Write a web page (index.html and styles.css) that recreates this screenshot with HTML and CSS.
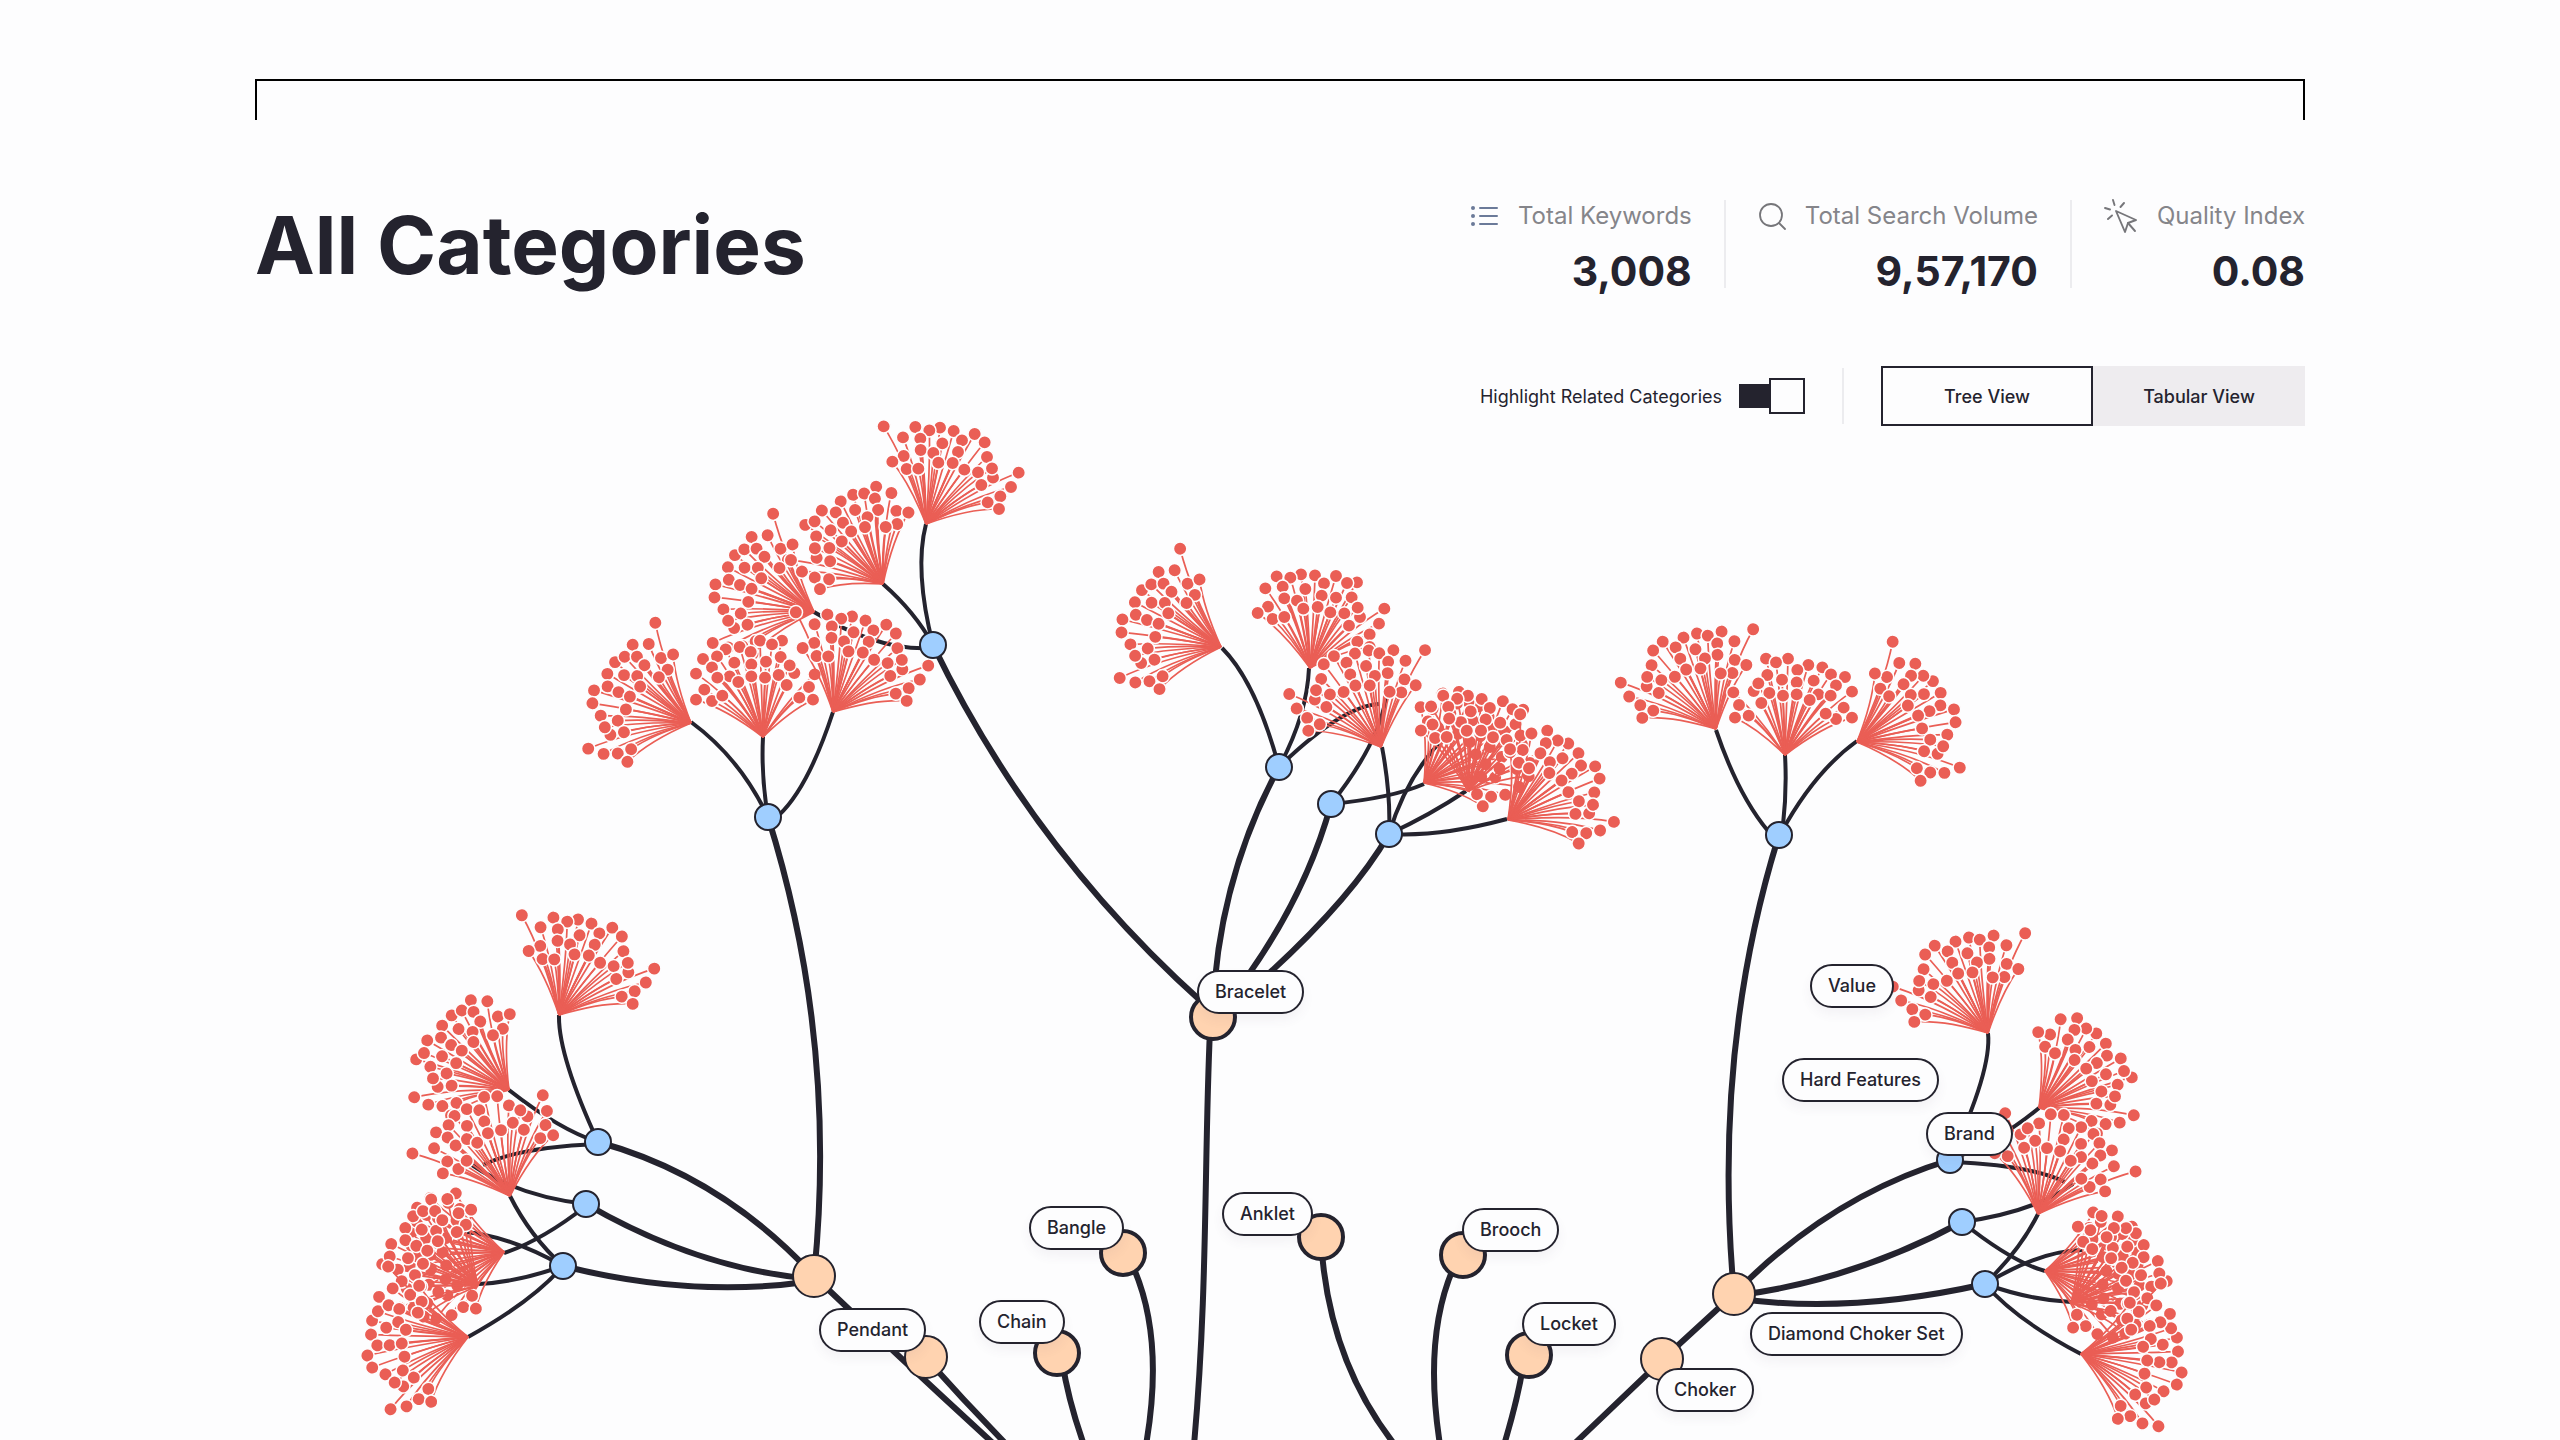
FILE: index.html
```html
<!DOCTYPE html>
<html lang="en">

<head>
    <meta charset="UTF-8">
    <meta name="viewport" content="width=device-width, initial-scale=1.0">
    <title>All Categories</title>

    <link rel="stylesheet" href="styles.css">
</head>

<body>

    <header class="page-header">
        <div class="bracket"></div>

        <div class="header-row">
            <h1>All Categories</h1>

            <div class="header-side">
                <div class="stats">
                    <div class="stat">
                        <div class="stat-label">
                            <svg class="icon" width="28" height="28" viewBox="0 0 28 28" fill="none" stroke="#6b7a99" stroke-width="2" stroke-linecap="round">
                                <path d="M9 6H26M9 14H26M9 22H26" />
                                <g fill="#6b7a99" stroke="none">
                                    <circle cx="2" cy="6" r="2" />
                                    <circle cx="2" cy="14" r="2" />
                                    <circle cx="2" cy="22" r="2" />
                                </g>
                            </svg>
                            <span>Total Keywords</span>
                        </div>
                        <div class="stat-value">3,008</div>
                    </div>
                    <div class="stat">
                        <div class="stat-label">
                            <svg class="icon" width="28" height="28" viewBox="0 0 28 28" fill="none" stroke="#76767a" stroke-width="1.8" stroke-linecap="round">
                                <circle cx="13" cy="13" r="11" />
                                <path d="M21 21L27 27" />
                            </svg>
                            <span>Total Search Volume</span>
                        </div>
                        <div class="stat-value">9,57,170</div>
                    </div>
                    <div class="stat">
                        <div class="stat-label">
                            <svg class="icon" width="34" height="34" viewBox="0 0 34 34" fill="none" stroke="#76767a" stroke-width="1.9" stroke-linecap="round" stroke-linejoin="round">
                                <path d="M12 12L32 21L24 24L21 33Z" />
                                <path d="M24 24L31 32" />
                                <path d="M9 1L10.500 6M20 4L16.500 8M1 9L6 10.500M4 20L8 16.500" />
                            </svg>
                            <span>Quality Index</span>
                        </div>
                        <div class="stat-value">0.08</div>
                    </div>
                </div>

                <div class="controls">
                    <label class="toggle" for="highlight">
                        Highlight Related Categories
                        <input type="checkbox" id="highlight" checked>
                    </label>
                    <div class="separator"></div>
                    <div class="view-switch">
                        <button type="button" class="active">Tree View</button>
                        <button type="button">Tabular View</button>
                    </div>
                </div>
            </div>
        </div>
    </header>

    <main class="tree" id="tree">
        <svg class="tree-drawing" viewBox="0 400 2560 1040">
            <!-- trunk and category branches -->
            <g class="branch">
                <path d="M933 645Q1032 850 1203 1003" />
                <path d="M768 817Q838 1040 814 1276" />
                <path d="M1210 1030C1204 1160 1208 1290 1194 1445" />
                <path d="M1279 767Q1218 880 1213 1010" />
                <path d="M1331 804Q1302 910 1222 1010" />
                <path d="M1389 834Q1344 912 1225 1012" />
                <path d="M1779 835Q1712 1050 1734 1294" />
                <path d="M598 1142Q722 1176 814 1276" />
                <path d="M586 1204Q700 1270 814 1279" />
                <path d="M563 1266Q690 1298 806 1282" />
                <path d="M1950 1160Q1830 1196 1734 1294" />
                <path d="M1962 1222Q1854 1280 1740 1295" />
                <path d="M1985 1284Q1852 1314 1740 1299" />
                <path d="M814 1276Q900 1358 995 1445" />
                <path d="M925 1357Q965 1402 1007 1445" />
                <path d="M1062 1360Q1068 1400 1084 1445" />
                <path d="M1128 1256Q1166 1330 1146 1445" />
                <path d="M1321 1240Q1328 1360 1395 1445" />
                <path d="M1458 1258Q1422 1330 1440 1445" />
                <path d="M1524 1360Q1519 1395 1504 1445" />
                <path d="M1734 1294L1662 1360L1573 1445" />
            </g>
            <!-- twigs from the blue nodes to the flowers -->
            <g class="twig">
                <path d="M933 645Q914 570 926 524" />
                <path d="M933 645Q915 612 883 584" />
                <path d="M933 648Q880 652 814 612" />
                <path d="M768 817Q740 758 691 722" />
                <path d="M768 817Q761 776 763 737" />
                <path d="M779 815Q808 788 833 712" />
                <path d="M1279 767Q1256 682 1222 648" />
                <path d="M1279 767Q1307 715 1309 668" />
                <path d="M1279 767Q1342 706 1379 704" />
                <path d="M1331 804Q1378 745 1386 698" />
                <path d="M1331 804Q1392 798 1424 784" />
                <path d="M1389 834Q1391 795 1382 747" />
                <path d="M1389 834Q1405 780 1440 742" />
                <path d="M1389 834Q1430 815 1466 791" />
                <path d="M1389 834Q1440 837 1507 819" />
                <path d="M1768 831Q1738 795 1716 730" />
                <path d="M1783 825Q1787 790 1785 755" />
                <path d="M1781 833Q1814 772 1857 741" />
                <path d="M598 1142Q558 1055 559 1015" />
                <path d="M598 1142Q560 1130 509 1090" />
                <path d="M598 1144Q520 1147 483 1165" />
                <path d="M586 1204Q518 1196 472 1165" />
                <path d="M586 1206Q541 1241 504 1253" />
                <path d="M563 1266Q530 1236 510 1196" />
                <path d="M563 1266Q510 1236 465 1232" />
                <path d="M563 1266Q518 1282 479 1284" />
                <path d="M563 1266Q533 1301 468 1337" />
                <path d="M1950 1160Q1992 1070 1988 1033" />
                <path d="M1950 1160Q1998 1142 2039 1108" />
                <path d="M1950 1162Q2030 1165 2065 1182" />
                <path d="M1962 1222Q2034 1212 2073 1184" />
                <path d="M1962 1222Q2012 1262 2045 1271" />
                <path d="M1985 1284Q2020 1250 2038 1214" />
                <path d="M1985 1284Q2042 1250 2083 1250" />
                <path d="M1985 1284Q2030 1300 2071 1302" />
                <path d="M1985 1284Q2016 1320 2081 1354" />
            </g>
            <g id="flowers"></g>
            <g id="nodes"></g>
        </svg>
    </main>

    <script src="tree.js"></script>

</body>

</html>
```
FILE: styles.css
```css
*,
*::after {
    box-sizing: border-box;
}

body {
    margin: 0;
    background: #fdfdfe;
    color: #24232e;
    font-family: 'Inter', 'Liberation Sans', sans-serif;
    overflow: hidden;
}

.page-header {
    position: relative;
    z-index: 2;
    margin: 0 calc(10% - 1px);
    padding-top: 79px;
}

/* Open frame above the title */
.bracket {
    height: 41px;
    border: 2px solid #000;
    border-bottom: none;
}

.header-row {
    display: flex;
    justify-content: space-between;
    align-items: flex-start;
    margin-top: 80px;
}

h1 {
    margin: 0;
    font-size: 80px;
    line-height: 90px;
    font-weight: 700;
}

.header-side {
    display: flex;
    flex-direction: column;
    align-items: flex-end;
    gap: 78px;
}

/* Totals */
.stats {
    display: flex;
}

.stat {
    display: flex;
    flex-direction: column;
    align-items: flex-end;
    gap: 22px;
    padding: 0 32px;
    border-right: 2px solid #ececef;
}

.stat:last-child {
    padding-right: 0;
    border-right: none;
}

.stat-label {
    display: flex;
    align-items: center;
    gap: 19px;
    height: 32px;
    font-size: 24px;
    line-height: 32px;
    font-weight: 400;
    color: #85858a;
}

.stat-value {
    font-size: 41px;
    line-height: 34px;
    font-weight: 700;
}

.icon {
    flex: none;
}

/* Toggle and view switch */
.controls {
    display: flex;
    align-items: center;
    gap: 37px;
    font-size: 18px;
}

.toggle {
    display: flex;
    align-items: center;
    gap: 17px;
}

.toggle input {
    appearance: none;
    position: relative;
    width: 66px;
    height: 24px;
    margin: 0;
    background: #24232e;
    cursor: pointer;
}

.toggle input::after {
    content: "";
    position: absolute;
    top: -6px;
    left: 0;
    width: 36px;
    height: 36px;
    border: 2px solid #24232e;
    background: #fdfdfe;
}

.toggle input:checked::after {
    left: auto;
    right: 0;
}

.separator {
    width: 2px;
    height: 56px;
    background: #ececef;
}

.view-switch {
    display: flex;
}

.view-switch button {
    width: 212px;
    height: 60px;
    border: none;
    background: #eeecef;
    color: inherit;
    font: inherit;
    font-weight: 500;
    cursor: pointer;
}

.view-switch .active {
    border: 2px solid #24232e;
    background: #fdfdfe;
}

/* Tree */
.tree {
    position: relative;
    margin-top: -26px;
}

.tree-drawing {
    display: block;
    width: 100%;
}

.branch,
.twig {
    fill: none;
    stroke: #24232e;
    stroke-width: 6;
}

.twig {
    stroke-width: 4;
}

.stem {
    fill: none;
    stroke: #ea5e55;
    stroke-width: 1.7;
}

.bud {
    fill: #ea5e55;
    stroke: #fdfdfe;
    stroke-width: 1.5;
}

.node {
    stroke: #24232e;
    stroke-width: 2;
}

.node.blue {
    fill: #9fceff;
}

.node.peach {
    fill: #ffd3b0;
}

.node.bold {
    stroke-width: 4;
}

.tag {
    position: absolute;
    height: 44px;
    padding: 0 16px;
    border: 2px solid #24232e;
    border-radius: 22px;
    background: #fdfdfe;
    box-shadow: 0 6px 12px rgba(80, 60, 110, 0.06);
    font-size: 18px;
    line-height: 39px;
    font-weight: 500;
    white-space: nowrap;
}
```
FILE: tree.js
```js
const SVG_NS = 'http://www.w3.org/2000/svg';

// Bud positions around the foot of each kind of flower, in thirds of a pixel
const flowerShapes = {
    wide: {
        axis: 19,
        buds: [
            [-127, -293], [-32, -291], [42, -289], [10, -281], [83, -279], [146, -270], [176, -245],
            [108, -251], [-69, -260], [-17, -256], [49, -242], [-16, -222], [22, -213], [96, -216],
            [-67, -204], [-101, -187], [-58, -165], [-23, -166], [37, -184], [80, -183], [115, -163],
            [156, -155], [183, -201], [201, -139], [198, -167], [166, -117], [278, -154], [255, -111],
            [223, -83], [185, -65], [219, -45]
        ]
    },
    slim: {
        axis: 10,
        buds: [
            [-126, -184], [-157, -165], [-112, -147], [-77, -153], [-134, -239], [-100, -275], [-27, -281],
            [-59, -271], [15, -278], [78, -276], [141, -257], [111, -255], [42, -254], [-14, -237],
            [-82, -244], [-77, -209], [-39, -202], [35, -217], [78, -211], [125, -212], [-20, -178],
            [23, -183], [61, -167], [103, -164], [150, -153], [143, -181], [117, -127], [223, -178],
            [207, -133], [179, -101], [142, -79], [179, -63]
        ]
    },
    even: {
        axis: -2,
        buds: [
            [-112, -263], [-138, -242], [-180, -234], [-153, -209], [-201, -190], [-70, -270], [-9, -289],
            [-37, -255], [57, -289], [27, -278], [-86, -223], [-35, -218], [9, -226], [53, -240],
            [94, -192], [80, -215], [47, -186], [6, -178], [-35, -182], [-100, -182], [-137, -178],
            [-74, -165], [71, -156], [-176, -142], [-201, -112], [-153, -108], [-122, -124], [109, -118],
            [138, -150], [150, -112], [155, -188]
        ]
    }
};

// shape, x, y, rotation, mirrored
const flowers = [
    ['wide', 926, 524, 0, false],
    ['wide', 814, 612, -46, true],
    ['slim', 883, 584, -24, true],
    ['wide', 691, 723, -43, true],
    ['even', 763, 737, 0, false],
    ['wide', 833, 712, 3, false],
    ['wide', 1221, 647, -46, true],
    ['slim', 1310, 668, 0, false],
    ['wide', 1381, 747, 1, true],
    ['slim', 1424, 783, 41, false],
    ['even', 1468, 791, 23, false],
    ['wide', 1508, 820, 30, false],
    ['wide', 1716, 729, -3, true],
    ['even', 1785, 755, 0, true],
    ['wide', 1857, 742, 43, false],
    ['wide', 559, 1015, 3, false],
    ['slim', 509, 1090, -43, true],
    ['wide', 510, 1196, -43, false],
    ['slim', 504, 1252, -83, true],
    ['even', 478, 1286, -66, true],
    ['wide', 468, 1337, -72, true],
    ['wide', 1988, 1033, -3, true],
    ['slim', 2039, 1108, 43, false],
    ['wide', 2038, 1214, 43, true],
    ['slim', 2045, 1271, 83, false],
    ['even', 2071, 1303, 66, false],
    ['wide', 2081, 1354, 72, false]
];

// x, y, radius, class
const nodes = [
    [933, 645, 13, 'blue'],
    [768, 817, 13, 'blue'],
    [1279, 767, 13, 'blue'],
    [1331, 804, 13, 'blue'],
    [1389, 834, 13, 'blue'],
    [1779, 835, 13, 'blue'],
    [598, 1142, 13, 'blue'],
    [586, 1204, 13, 'blue'],
    [563, 1266, 13, 'blue'],
    [1950, 1160, 13, 'blue'],
    [1962, 1222, 13, 'blue'],
    [1985, 1284, 13, 'blue'],
    [1213, 1017, 22, 'peach bold'],
    [814, 1276, 21, 'peach'],
    [926, 1357, 21, 'peach'],
    [1057, 1353, 22, 'peach bold'],
    [1123, 1253, 22, 'peach bold'],
    [1321, 1237, 22, 'peach bold'],
    [1463, 1255, 22, 'peach bold'],
    [1529, 1355, 22, 'peach bold'],
    [1662, 1359, 21, 'peach'],
    [1734, 1294, 21, 'peach']
];

const tags = [
    ['Bracelet', 1197, 970],
    ['Bangle', 1029, 1206],
    ['Anklet', 1222, 1192],
    ['Brooch', 1462, 1208],
    ['Pendant', 819, 1308],
    ['Chain', 979, 1300],
    ['Locket', 1522, 1302],
    ['Diamond Choker Set', 1750, 1312],
    ['Choker', 1656, 1368],
    ['Value', 1810, 964],
    ['Hard Features', 1782, 1058],
    ['Brand', 1926, 1112]
];

function add(parent, name, attributes) {
    const element = document.createElementNS(SVG_NS, name);
    for (const key in attributes) {
        element.setAttribute(key, attributes[key]);
    }
    parent.appendChild(element);
    return element;
}

function drawFlower(parent, [kind, x, y, angle, mirrored]) {
    const shape = flowerShapes[kind];
    const group = add(parent, 'g', {
        transform: `translate(${x} ${y}) rotate(${angle}) scale(${mirrored ? -1 : 1} 1)`
    });
    const buds = shape.buds.map(([bx, by]) => [bx / 3, by / 3]);
    const axis = shape.axis * Math.PI / 180;

    // stems leave the foot a bit closer to the middle of the flower
    buds.forEach(([bx, by]) => {
        const length = Math.hypot(bx, by);
        const direction = Math.atan2(bx, -by);
        const bend = axis + (direction - axis) * 0.86;
        const cx = Math.sin(bend) * length * 0.6;
        const cy = -Math.cos(bend) * length * 0.6;
        add(group, 'path', { class: 'stem', d: `M0 0Q${cx} ${cy} ${bx} ${by}` });
    });

    buds.forEach(([bx, by]) => {
        add(group, 'circle', { class: 'bud', cx: bx, cy: by, r: 6.7 });
    });
}

const flowerLayer = document.getElementById('flowers');
flowers.forEach(flower => drawFlower(flowerLayer, flower));

const nodeLayer = document.getElementById('nodes');
nodes.forEach(([cx, cy, r, kind]) => add(nodeLayer, 'circle', { class: 'node ' + kind, cx, cy, r }));

const tree = document.getElementById('tree');
tags.forEach(([text, x, y]) => {
    const tag = document.createElement('span');
    tag.className = 'tag';
    tag.textContent = text;
    tag.style.left = x / 2560 * 100 + '%';
    tag.style.top = (y - 400) / 1040 * 100 + '%';
    tree.appendChild(tag);
});
```
